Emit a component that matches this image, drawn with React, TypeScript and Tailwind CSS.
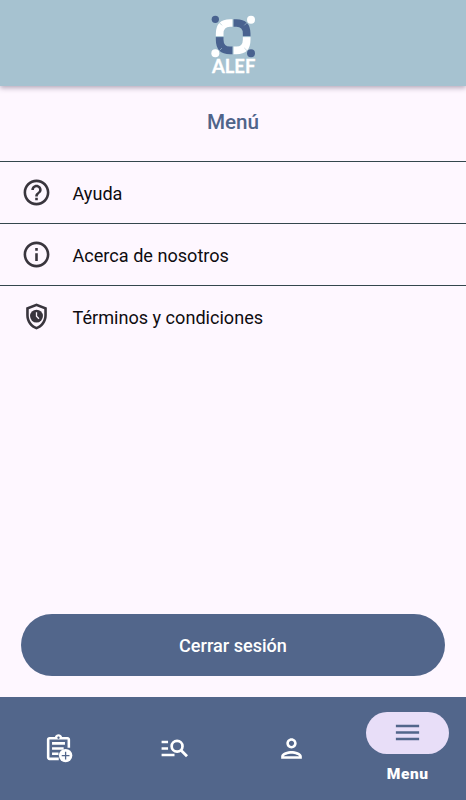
import type { ReactNode } from "react";

function AlefLogo() {
  return (
    <svg className="h-[76px] w-[66px]" viewBox="0 0 198 228" role="img" aria-label="ALEF">
      <g fill="none" strokeWidth="23">
        <path d="M59 94V86Q59 54 90 54H98" stroke="#fff" />
        <path d="M100 54H109Q140 54 140 86V94" stroke="#49628f" />
        <path d="M59 96V104Q59 136 90 136H98" stroke="#49628f" />
        <path d="M140 96V104Q140 136 109 136H100" stroke="#fff" />
      </g>
      <g stroke="#a6c2d0" strokeWidth="2">
        <path d="M99 42V66M99 124V148M47 95H71M128 95H152" />
        <path d="M58 53l8 8M141 53l-8 8M58 137l8-8M141 137l-8-8" />
      </g>
      <circle cx="46" cy="43" r="11" fill="#49628f" />
      <circle cx="153" cy="44" r="12" fill="#fff" />
      <circle cx="46" cy="145" r="12" fill="#fff" />
      <circle cx="153" cy="145" r="12" fill="#49628f" />
      <text x="36" y="204" fill="#fff" stroke="#fff" strokeWidth="1" fontSize="59" fontWeight="700" fontFamily="Lato, sans-serif" textLength="130" lengthAdjust="spacingAndGlyphs">ALEF</text>
    </svg>
  );
}

function Icon({ children }: { children: ReactNode }) {
  return <svg className="size-[31px] shrink-0" viewBox="0 0 24 24" fill="currentColor">{children}</svg>;
}

const rows = [
  {
    label: "Ayuda",
    icon: <path d="M11 18h2v-2h-2v2zm1-16C6.48 2 2 6.48 2 12s4.480 10 10 10 10-4.480 10-10S17.520 2 12 2zm0 18c-4.410 0-8-3.590-8-8s3.590-8 8-8 8 3.590 8 8-3.590 8-8 8zm0-14c-2.210 0-4 1.790-4 4h2c0-1.100.9-2 2-2s2 .9 2 2c0 2-3 1.750-3 5h2c0-2.250 3-2.500 3-5 0-2.210-1.790-4-4-4z" />,
  },
  {
    label: "Acerca de nosotros",
    icon: <path d="M11 7h2v2h-2zm0 4h2v6h-2zm1-9C6.480 2 2 6.480 2 12s4.480 10 10 10 10-4.480 10-10S17.520 2 12 2zm0 18c-4.410 0-8-3.590-8-8s3.590-8 8-8 8 3.590 8 8-3.590 8-8 8z" />,
  },
  {
    label: "Términos y condiciones",
    icon: (
      <>
        <path d="M12 2 4 5v6.090c0 5.050 3.410 9.760 8 10.910 4.590-1.150 8-5.860 8-10.910V5l-8-3zm6 9.090c0 4-2.550 7.700-6 8.830-3.450-1.130-6-4.820-6-8.830V6.390l6-2.250 6 2.250v4.700z" />
        <circle cx="12" cy="11.700" r="5" />
        <path d="M12 8.700v3.100l1.900 1.900" fill="none" stroke="#fef7ff" strokeWidth="1" />
      </>
    ),
  },
];

export default function App() {
  return (
    <div className="flex h-[800px] w-full flex-col overflow-hidden bg-[#fef7ff] font-['Roboto',sans-serif]">
      <header className="flex h-[86px] shrink-0 justify-center bg-[#a6c2d0] pt-[5px] shadow-[0_2px_5px_rgba(70,50,80,0.4)]">
        <AlefLogo />
      </header>
      <main className="flex flex-1 flex-col">
        <h1 className="flex h-[75px] shrink-0 items-center justify-center pb-px text-[20.700px] font-medium text-[#50648a]">Menú</h1>
        <ul>
          {rows.map((row) => (
            <li key={row.label} className="flex h-[62px] items-center border-t border-[#34474d] pb-px pl-[20.500px] text-[#39353d]">
              <Icon>{row.icon}</Icon>
              <span className="ml-[21px] whitespace-nowrap pt-[3px] text-[18.100px] text-[#0e0c10]">{row.label}</span>
            </li>
          ))}
        </ul>
        <button className="mx-[21px] mt-auto mb-[21px] h-[62px] rounded-full bg-[#52668b] pt-0.5 text-[18.100px] font-medium text-white">Cerrar sesión</button>
      </main>
      <nav className="grid h-[103px] shrink-0 grid-cols-4 bg-[#52668b] text-white">
        <button className="flex items-center justify-center pb-px">
          <Icon>
            <path d="M21 11.500V5c0-1.100-.9-2-2-2h-4.200C14.400 1.840 13.300 1 12 1S9.600 1.840 9.200 3H5c-1.100 0-2 .9-2 2v14c0 1.100.9 2 2 2h7.200v-2H5V5h14v6.500zM12 2.800c.5 0 .9.4.9.9s-.4.9-.9.9-.9-.4-.9-.9.400-.9.900-.9z" />
            <path d="M7 7h10v2H7zM7 11h9v2H7zM7 15h5v2H7z" />
            <circle cx="17.500" cy="17.500" r="5.200" />
            <path d="M17.500 14.500v6M14.500 17.500h6" fill="none" stroke="#52668b" strokeWidth="1" />
          </Icon>
        </button>
        <button className="flex items-center justify-center">
          <Icon>
            <path d="M2 6h5v2H2zM2 11h5v2H2zM2 16h10v2H2z" />
            <circle cx="14" cy="10.300" r="4.200" fill="none" stroke="currentColor" strokeWidth="2.100" />
            <path d="m17 13.300 4.700 4.700" fill="none" stroke="currentColor" strokeWidth="2.200" />
          </Icon>
        </button>
        <button className="flex items-center justify-center pb-px">
          <Icon>
            <path d="M12 6c1.100 0 2 .9 2 2s-.9 2-2 2-2-.9-2-2 .9-2 2-2m0 10c2.700 0 5.800 1.290 6 2H6c.230-.720 3.310-2 6-2m0-12C9.790 4 8 5.790 8 8s1.790 4 4 4 4-1.790 4-4-1.790-4-4-4zm0 10c-2.670 0-8 1.340-8 4v2h16v-2c0-2.660-5.330-4-8-4z" />
          </Icon>
        </button>
        <button className="flex flex-col items-center pt-[15px]">
          <span className="flex h-[42px] w-[83px] items-center justify-center rounded-full bg-[#e8def8] pb-px text-[#52668b]">
            <Icon><path d="M3 18h18v-2H3v2zm0-5h18v-2H3v2zm0-7v2h18V6H3z" /></Icon>
          </span>
          <span className="mt-2.5 text-[15.500px] leading-5 font-black tracking-[0.600px]">Menu</span>
        </button>
      </nav>
    </div>
  );
}
